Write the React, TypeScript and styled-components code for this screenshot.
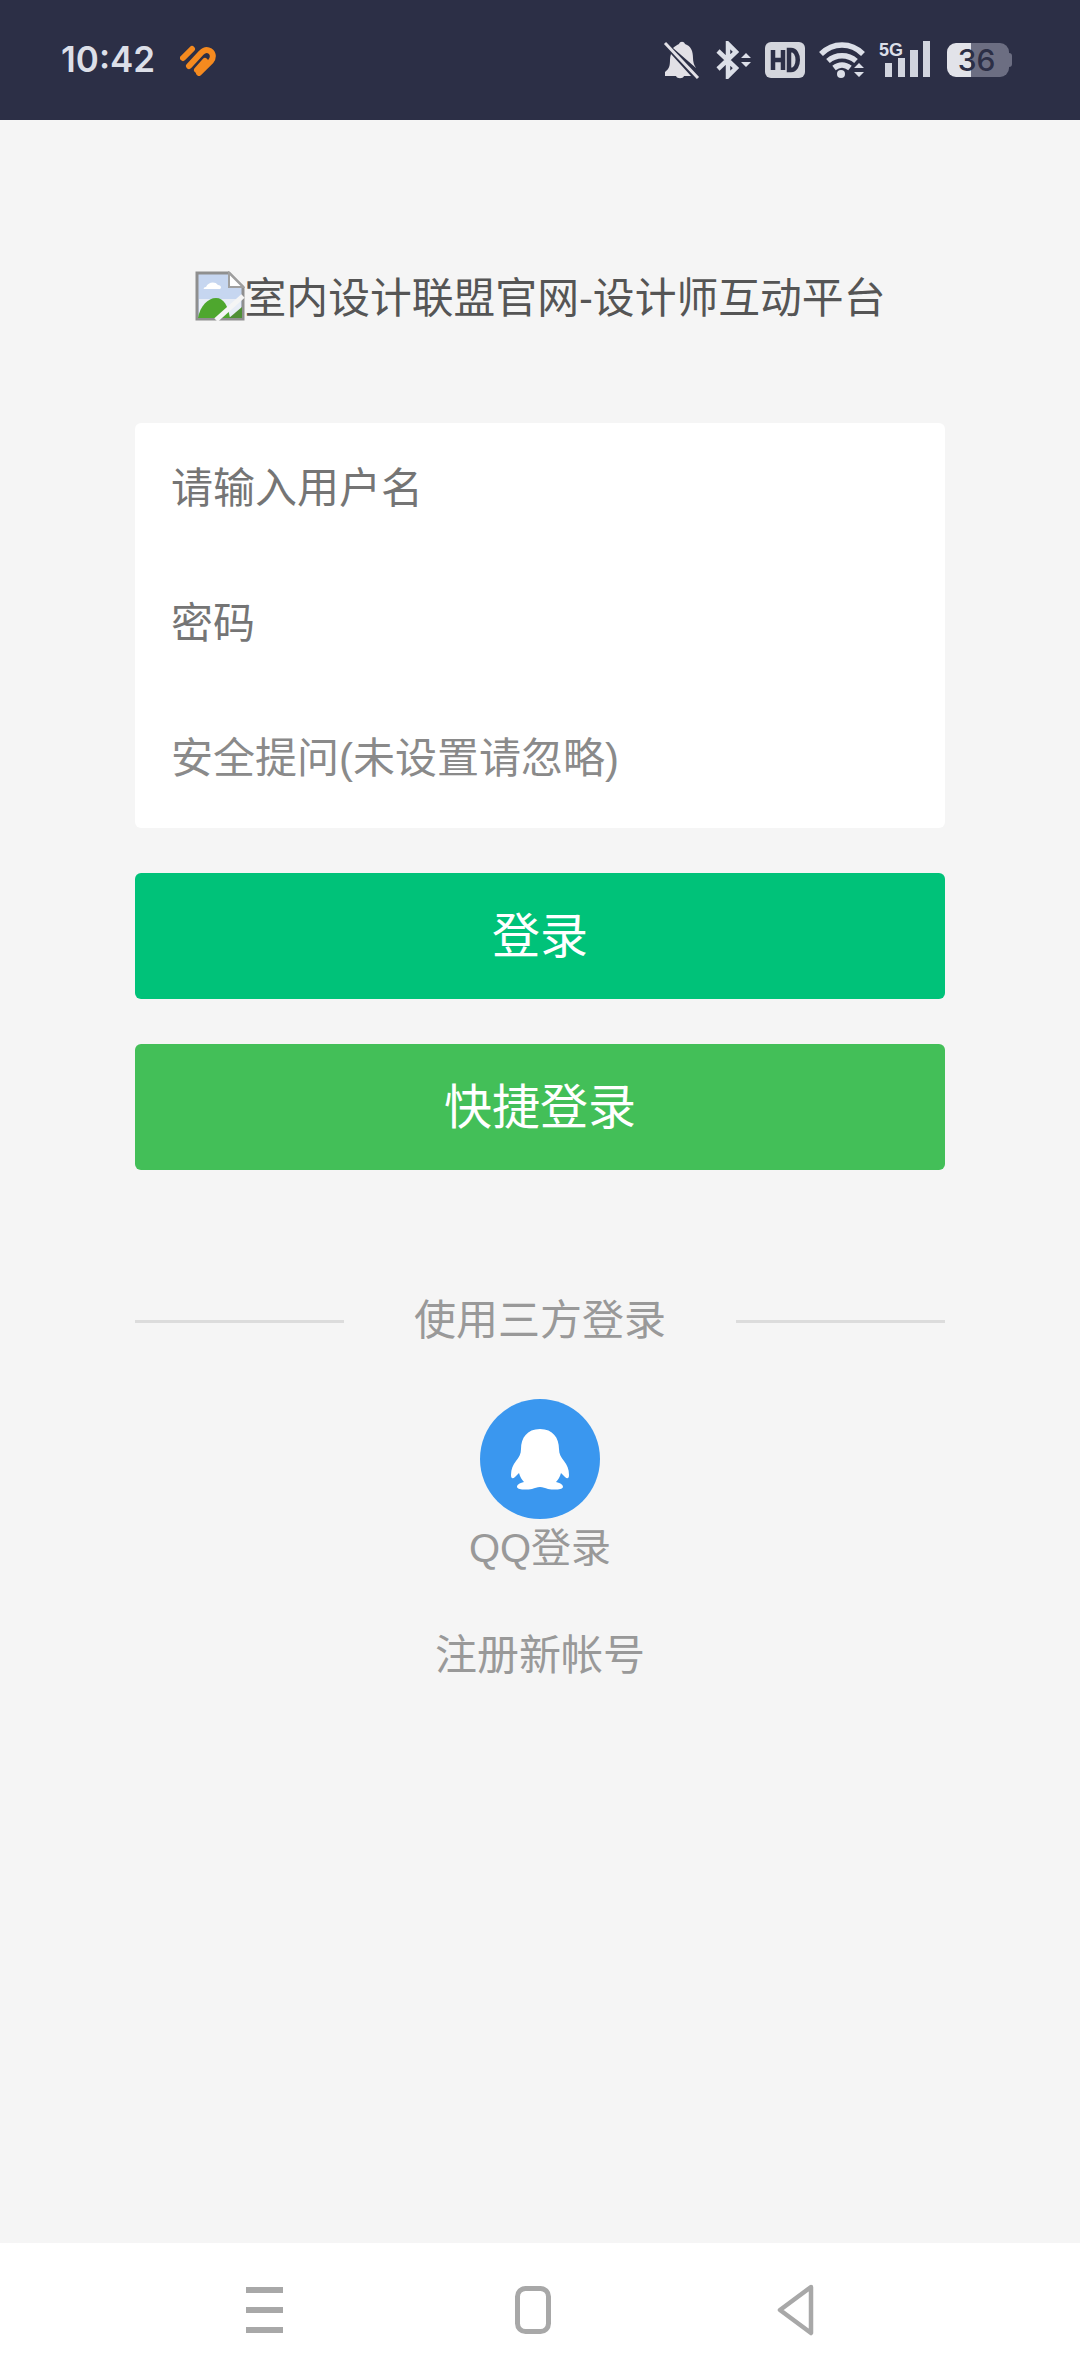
import styled, { createGlobalStyle } from "styled-components";

const GlobalStyle = createGlobalStyle`
  html, body {
    margin: 0;
    padding: 0;
    background: #f5f5f5;
  }
  * {
    box-sizing: border-box;
  }
`;

const Page = styled.div`
  width: 1080px;
  height: 2376px;
  display: flex;
  flex-direction: column;
  overflow: hidden;
  font-family: "Liberation Sans", "Noto Sans CJK SC", sans-serif;
`;

const StatusBar = styled.header`
  height: 120px;
  flex: none;
  display: flex;
  align-items: center;
  padding: 0 68px 0 61px;
  background: #2c2f46;
  color: #dcdfe8;
`;

const Clock = styled.span`
  font-family: Inter, "Liberation Sans", sans-serif;
  font-size: 35px;
  font-weight: 600;
  width: 119px;
  margin-top: -2px;
`;

const StatusIcons = styled.div`
  margin-left: auto;
  display: flex;
  align-items: center;
  gap: 14px;
`;

const SignalIcon = styled.svg`
  margin-bottom: 6px;
`;

const Battery = styled.div`
  position: relative;
  width: 62px;
  height: 34px;
  margin: 0 3px 0 2px;
  padding-right: 3px;
  border-radius: 9px;
  display: flex;
  align-items: center;
  justify-content: center;
  background: linear-gradient(90deg, #e2e3e9 0 24px, #6c6e82 24px 100%);
  color: #2c2f46;
  font-family: Inter, "Liberation Sans", sans-serif;
  font-size: 30px;
  font-weight: 500;

  &::after {
    content: "";
    position: absolute;
    right: -3px;
    top: 10px;
    width: 3px;
    height: 14px;
    border-radius: 0 3px 3px 0;
    background: #6c6e82;
  }
`;

const Main = styled.main`
  flex: 1;
  display: flex;
  flex-direction: column;
  align-items: stretch;
  padding: 148px 135px 0;
  background: #f5f5f5;
`;

const Title = styled.h1`
  margin: 0;
  height: 56px;
  padding-top: 6px;
  display: flex;
  align-items: center;
  justify-content: center;
  font-size: 41.8px;
  font-weight: 400;
  line-height: 50px;
  color: #555555;
`;

const TitleImage = styled.svg`
  flex: none;
  width: 50px;
  height: 50px;
  margin-top: -6px;
`;

const Form = styled.div`
  margin-top: 99px;
  background: #ffffff;
  border-radius: 6px;
`;

const Field = styled.div<{ $tone: string }>`
  height: 135px;
  display: flex;
  align-items: center;
  padding: 0 0 12px 36px;
  font-size: 42px;
  color: ${(p) => p.$tone};
`;

const Button = styled.button<{ $bg: string }>`
  display: block;
  width: 100%;
  height: 126px;
  margin-top: 45px;
  padding: 0 0 9px;
  border: 0;
  border-radius: 6px;
  background: ${(p) => p.$bg};
  color: #ffffff;
  font-family: inherit;
  font-size: 48px;
`;

const DividerRow = styled.div`
  margin-top: 115px;
  display: flex;
  align-items: center;
  gap: 70px;
  font-size: 42px;
  line-height: 72px;
  color: #999999;
  white-space: nowrap;
`;

const Rule = styled.span`
  flex: 1;
  height: 3px;
  background: #dcdcdc;
`;

const QQBlock = styled.div`
  margin-top: 42px;
  display: flex;
  flex-direction: column;
  align-items: center;
  font-size: 40px;
  line-height: 58px;
  color: #999999;
`;

const QQCircle = styled.svg`
  display: block;
  width: 120px;
  height: 120px;
`;

const RegisterLink = styled.div`
  margin-top: 51px;
  text-align: center;
  font-size: 42px;
  line-height: 56px;
  color: #999999;
`;

const NavBar = styled.footer`
  height: 133px;
  flex: none;
  display: grid;
  grid-template-columns: 269px 262px 38px;
  align-items: center;
  padding-left: 246px;
  background: #ffffff;
`;

const BrokenImage = () => (
  <TitleImage viewBox="0 0 50 50">
    <path d="M2 2h32l14 14v32H2z" fill="#c6d6f0" stroke="#8f8f8f" strokeWidth="3" />
    <path d="M4 28h42v18H4z" fill="#e8edf6" />
    <path d="M34 2v14h14z" fill="#ffffff" stroke="#a0a0a0" strokeWidth="2" />
    <path d="M11 16c2-5 9-6 12-2 3 0 4 3 2 4H9c-1 0 0-2 2-2z" fill="#ffffff" />
    <path d="M3 47c2-12 10-20 18-20 8 0 12 8 14 20z" fill="#4ea72e" />
    <path d="M34 47h13V36z" fill="#4f8f36" />
    <path d="M21 49 48 25" stroke="#f5f5f5" strokeWidth="5" />
  </TitleImage>
);

const HeartLogo = () => (
  <svg width="36" height="32" viewBox="0 0 36 32" fill="none" stroke="#f58a1f" strokeWidth="6">
    <path d="M3 14 12 5" strokeLinecap="round" />
    <path d="M9 22 21 9c3-3 6-4 9-2s4 6 1 10L19 29" strokeLinecap="round" />
    <path d="M17 26 25 17" strokeLinecap="round" />
  </svg>
);

const BellOff = () => (
  <svg width="39" height="38" viewBox="0 0 39 38">
    <path d="M2 31c4-3 5-6 5-12 0-2 .3-4 1-6l20 22H2z" fill="#e2e0e6" />
    <path d="M10 7c2-2 4-3 6-4 1-3 5-3 6 0 6 2 8 7 8 14 0 4 1 7 3 10z" fill="#e2e0e6" />
    <path d="M13 35h8c-1 3-7 3-8 0z" fill="#e2e0e6" />
    <path d="M2 2 35 37" stroke="#e2e0e6" strokeWidth="3" />
  </svg>
);

const Bluetooth = () => (
  <svg width="35" height="38" viewBox="0 0 35 38" fill="none">
    <path d="M2 10 20 27l-8 8V3l8 8L2 28" stroke="#dcdfe8" strokeWidth="4.5" />
    <path d="M25 17l5-5 5 5zM25 21l5 5 5-5z" fill="#dcdfe8" />
  </svg>
);

const HdBadge = () => (
  <svg width="40" height="36" viewBox="0 0 40 36">
    <rect width="40" height="36" rx="6" fill="#d4d6dd" />
    <path d="M8 8v20M18 8v20M8 18h10M24 8v20h2c9 0 9-20 0-20z" fill="none" stroke="#2c2f46" strokeWidth="4.5" />
  </svg>
);

const Wifi = () => (
  <svg width="46" height="38" viewBox="0 0 46 38" fill="none" stroke="#dcdfe8" strokeWidth="5.5">
    <path d="M2 13c12-12 30-12 42 0" />
    <path d="M9 20c8-7 20-7 28 0" />
    <path d="M15 27c5-4 11-4 16 0" />
    <circle cx="22" cy="33" r="4" fill="#dcdfe8" stroke="none" />
    <path d="M35 27l5-5 5 5zM35 31l5 5 5-5z" fill="#dcdfe8" stroke="none" />
  </svg>
);

const Signal = () => (
  <SignalIcon width="52" height="40" viewBox="0 0 52 40" fill="#d2d5df">
    <rect x="6" y="26" width="7" height="14" />
    <rect x="19" y="21" width="7" height="19" />
    <rect x="31" y="13" width="8" height="27" />
    <rect x="44" y="4" width="7" height="36" />
    <text x="0" y="19" fontFamily="Liberation Sans" fontSize="18" fontWeight="700" fill="#dcdfe8">5G</text>
  </SignalIcon>
);

const QQIcon = () => (
  <QQCircle viewBox="0 0 120 120">
    <circle cx="60" cy="60" r="60" fill="#3a97ef" />
    <path
      d="M60 30C47 30 41 39 41 50C41 55 39 58 36 62C33 66 31 70 31 76C31 80 33 80 35 78L39 74C40 78 42 81 44 83C39 84 37 86 37 88C38 91 46 91 52 90C55 89 57 88 60 88C63 88 65 89 68 90C74 91 82 91 83 88C83 86 81 84 76 83C78 81 80 78 81 74L85 78C87 80 89 80 89 76C89 70 87 66 84 62C81 58 79 55 79 50C79 39 73 30 60 30z"
      fill="#ffffff"
    />
  </QQCircle>
);

const NavMenu = () => (
  <svg width="37" height="46" viewBox="0 0 37 46" fill="#a8a8a8">
    <rect y="0" width="37" height="6" />
    <rect y="20" width="37" height="6" />
    <rect y="40" width="37" height="6" />
  </svg>
);

const NavHome = () => (
  <svg width="36" height="48" viewBox="0 0 36 48">
    <rect x="2.5" y="2.5" width="31" height="43" rx="8" fill="none" stroke="#a8a8a8" strokeWidth="5" />
  </svg>
);

const NavBack = () => (
  <svg width="38" height="52" viewBox="0 0 38 52">
    <path d="M34 3 3 26l31 23z" fill="none" stroke="#a8a8a8" strokeWidth="4.5" strokeLinejoin="round" />
  </svg>
);

function App() {
  return (
    <Page>
      <GlobalStyle />
      <StatusBar>
        <Clock>10:42</Clock>
        <HeartLogo />
        <StatusIcons>
          <BellOff />
          <Bluetooth />
          <HdBadge />
          <Wifi />
          <Signal />
          <Battery>36</Battery>
        </StatusIcons>
      </StatusBar>
      <Main>
        <Title>
          <BrokenImage />
          室内设计联盟官网-设计师互动平台
        </Title>
        <Form>
          <Field $tone="#757575">请输入用户名</Field>
          <Field $tone="#757575">密码</Field>
          <Field $tone="#8a8a8a">安全提问(未设置请忽略)</Field>
        </Form>
        <Button $bg="#00c279">登录</Button>
        <Button $bg="#43bf58">快捷登录</Button>
        <DividerRow>
          <Rule />
          使用三方登录
          <Rule />
        </DividerRow>
        <QQBlock>
          <QQIcon />
          QQ登录
        </QQBlock>
        <RegisterLink>注册新帐号</RegisterLink>
      </Main>
      <NavBar>
        <NavMenu />
        <NavHome />
        <NavBack />
      </NavBar>
    </Page>
  );
}

export default App;
